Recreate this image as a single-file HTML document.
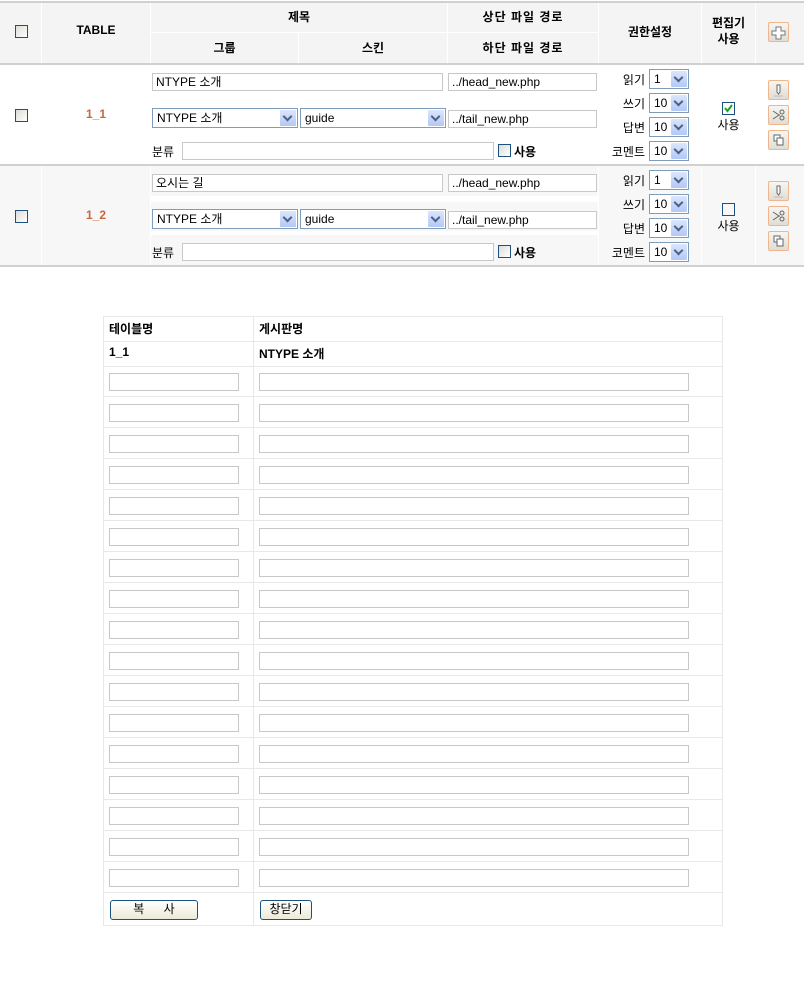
<!DOCTYPE html>
<html><head><meta charset="utf-8">
<style>
*{box-sizing:border-box;margin:0;padding:0}
body{width:804px;height:1000px;background:#fff;position:relative;overflow:hidden;font-family:"Liberation Sans","Noto Sans CJK KR","NanumGothic",sans-serif;font-size:12px;color:#000}
.a{position:absolute}
.hd{position:absolute;font-weight:bold;font-size:12px;text-align:center;white-space:nowrap}
.inp{position:absolute;border:1px solid #c8c8c8;background:#fff;height:18px;font-size:12px;line-height:16px;padding-left:3px;white-space:nowrap;overflow:hidden}
.sel{position:absolute;border:1px solid #7f9db9;background:#fff;height:20px;font-size:12px;line-height:18px;padding-left:4px;white-space:nowrap}
.sel i{position:absolute;right:1px;top:1px;width:16px;height:16px;background:linear-gradient(#dbe6fd,#b3c8f6);border-radius:1px}
.sel i:after{content:"";position:absolute;left:4px;top:4px;width:5px;height:5px;border-right:2px solid #4d6185;border-bottom:2px solid #4d6185;transform:rotate(45deg);top:3px}
.cb{position:absolute;width:13px;height:13px;border:1px solid #1c5180;background:linear-gradient(135deg,#dcdcd7,#fff)}
.ib{position:absolute;width:21px;height:20px;border:1px solid #f0b58a;background:linear-gradient(#f7f6f2,#e0ddd4);border-radius:2px}
.vl{position:absolute;width:1px;background:#fff}
.lt{position:absolute;border:1px solid #e8e8e8}
.lin{position:absolute;border:1px solid #c8c8c8;background:#fff;height:18px}
.btn{position:absolute;height:20px;border:1px solid #1c5180;border-radius:3px;background:linear-gradient(#fff,#ece9d8);font-size:12px;text-align:center;line-height:17px}
.lbl{position:absolute;width:40px;text-align:right;font-size:12px}
</style></head><body>

<!-- header -->
<div class="a" style="left:0;top:1px;width:804px;height:64px;background:#f4f4f4;border-top:2px solid #d0d0d0;border-bottom:2px solid #d0d0d0"></div>
<div class="vl" style="left:41px;top:3px;height:60px"></div>
<div class="vl" style="left:150px;top:3px;height:60px"></div>
<div class="vl" style="left:298px;top:32px;height:31px"></div>
<div class="vl" style="left:447px;top:3px;height:60px"></div>
<div class="vl" style="left:598px;top:3px;height:60px"></div>
<div class="vl" style="left:701px;top:3px;height:60px"></div>
<div class="vl" style="left:755px;top:3px;height:60px"></div>
<div class="a" style="left:151px;top:32px;width:447px;height:1px;background:#fff"></div>
<div class="cb" style="left:15px;top:25px"></div>
<div class="hd" style="left:42px;width:108px;top:23px">TABLE</div>
<div class="hd" style="left:151px;width:296px;top:8px">제목</div>
<div class="hd" style="left:151px;width:147px;top:39px">그룹</div>
<div class="hd" style="left:299px;width:148px;top:39px">스킨</div>
<div class="hd" style="left:448px;width:150px;top:8px;letter-spacing:1px">상단 파일 경로</div>
<div class="hd" style="left:448px;width:150px;top:39px;letter-spacing:1px">하단 파일 경로</div>
<div class="hd" style="left:599px;width:102px;top:23px">권한설정</div>
<div class="hd" style="left:702px;width:53px;top:15px;line-height:16px">편집기<br>사용</div>
<div class="ib" style="left:768px;top:22px"><svg width="19" height="18" style="position:absolute;left:0;top:0"><path d="M7 4h5v4h4v4h-4v4h-5v-4h-4v-4h4z" fill="#fff" stroke="#777"/></svg></div>

<!-- row 1 -->
<div class="a" style="left:0;top:164px;width:804px;height:2px;background:#d0d0d0"></div>
<div class="cb" style="left:15px;top:109px"></div>
<div class="hd" style="left:42px;width:108px;top:107px;color:#c8683a">1_1</div>
<div class="inp" style="left:152px;top:73px;width:291px">NTYPE 소개</div>
<div class="inp" style="left:448px;top:73px;width:149px">../head_new.php</div>
<div class="sel" style="left:152px;top:108px;width:146px">NTYPE 소개<i></i></div>
<div class="sel" style="left:300px;top:108px;width:146px">guide<i></i></div>
<div class="inp" style="left:448px;top:110px;width:149px">../tail_new.php</div>
<div class="a" style="left:152px;top:143px">분류</div>
<div class="inp" style="left:182px;top:142px;width:312px"></div>
<div class="cb" style="left:498px;top:144px"></div>
<div class="a" style="left:514px;top:143px;font-weight:bold">사용</div>
<div class="lbl" style="left:605px;top:71px">읽기</div><div class="sel" style="left:649px;top:69px;width:40px">1<i></i></div>
<div class="lbl" style="left:605px;top:95px">쓰기</div><div class="sel" style="left:649px;top:93px;width:40px">10<i></i></div>
<div class="lbl" style="left:605px;top:119px">답변</div><div class="sel" style="left:649px;top:117px;width:40px">10<i></i></div>
<div class="lbl" style="left:605px;top:143px">코멘트</div><div class="sel" style="left:649px;top:141px;width:40px">10<i></i></div>
<div class="cb" style="left:722px;top:102px;background:#fff"><svg width="11" height="11" style="position:absolute;left:0;top:0"><path d="M2 5l2.5 3L9 2" fill="none" stroke="#22a022" stroke-width="2"/></svg></div>
<div class="a" style="left:702px;width:53px;text-align:center;top:116px">사용</div>
<div class="ib" style="left:768px;top:80px"><svg width="19" height="18" style="position:absolute"><path d="M8 4h3v7l-1.5 2L8 11z" fill="#fff" stroke="#666"/><path d="M5 15h9" stroke="#bbb"/></svg></div>
<div class="ib" style="left:768px;top:105px"><svg width="19" height="18" style="position:absolute"><path d="M4 5l6 4 -6 4M10 9h1" fill="none" stroke="#666"/><circle cx="13" cy="6" r="2" fill="none" stroke="#666"/><circle cx="13" cy="12" r="2" fill="none" stroke="#666"/></svg></div>
<div class="ib" style="left:768px;top:130px"><svg width="19" height="18" style="position:absolute"><rect x="5" y="4" width="6" height="6" fill="#fff" stroke="#666"/><rect x="8" y="7" width="6" height="7" fill="#fff" stroke="#666"/></svg></div>

<!-- row 2 -->
<div class="a" style="left:0;top:166px;width:804px;height:99px;background:#f7f7f7"></div>
<div class="vl" style="left:41px;top:166px;height:99px"></div>
<div class="vl" style="left:150px;top:166px;height:99px"></div>
<div class="vl" style="left:598px;top:166px;height:99px"></div>
<div class="vl" style="left:701px;top:166px;height:99px"></div>
<div class="vl" style="left:755px;top:166px;height:99px"></div>
<div class="a" style="left:151px;top:196px;width:447px;height:6px;background:#fff"></div>
<div class="a" style="left:151px;top:231px;width:447px;height:4px;background:#fff"></div>
<div class="a" style="left:0;top:265px;width:804px;height:2px;background:#d0d0d0"></div>
<div class="cb" style="left:15px;top:210px"></div>
<div class="hd" style="left:42px;width:108px;top:208px;color:#c8683a">1_2</div>
<div class="inp" style="left:152px;top:174px;width:291px">오시는 길</div>
<div class="inp" style="left:448px;top:174px;width:149px">../head_new.php</div>
<div class="sel" style="left:152px;top:209px;width:146px">NTYPE 소개<i></i></div>
<div class="sel" style="left:300px;top:209px;width:146px">guide<i></i></div>
<div class="inp" style="left:448px;top:211px;width:149px">../tail_new.php</div>
<div class="a" style="left:152px;top:244px">분류</div>
<div class="inp" style="left:182px;top:243px;width:312px"></div>
<div class="cb" style="left:498px;top:245px"></div>
<div class="a" style="left:514px;top:244px;font-weight:bold">사용</div>
<div class="lbl" style="left:605px;top:172px">읽기</div><div class="sel" style="left:649px;top:170px;width:40px">1<i></i></div>
<div class="lbl" style="left:605px;top:196px">쓰기</div><div class="sel" style="left:649px;top:194px;width:40px">10<i></i></div>
<div class="lbl" style="left:605px;top:220px">답변</div><div class="sel" style="left:649px;top:218px;width:40px">10<i></i></div>
<div class="lbl" style="left:605px;top:244px">코멘트</div><div class="sel" style="left:649px;top:242px;width:40px">10<i></i></div>
<div class="cb" style="left:722px;top:203px;background:#f7f7f7"></div>
<div class="a" style="left:702px;width:53px;text-align:center;top:217px">사용</div>
<div class="ib" style="left:768px;top:181px"><svg width="19" height="18" style="position:absolute"><path d="M8 4h3v7l-1.5 2L8 11z" fill="#fff" stroke="#666"/><path d="M5 15h9" stroke="#bbb"/></svg></div>
<div class="ib" style="left:768px;top:206px"><svg width="19" height="18" style="position:absolute"><path d="M4 5l6 4 -6 4M10 9h1" fill="none" stroke="#666"/><circle cx="13" cy="6" r="2" fill="none" stroke="#666"/><circle cx="13" cy="12" r="2" fill="none" stroke="#666"/></svg></div>
<div class="ib" style="left:768px;top:231px"><svg width="19" height="18" style="position:absolute"><rect x="5" y="4" width="6" height="6" fill="#fff" stroke="#666"/><rect x="8" y="7" width="6" height="7" fill="#fff" stroke="#666"/></svg></div>

<!-- lower table -->
<div class="lt" style="left:103px;top:316px;width:620px;height:610px"></div>
<div class="a" style="left:253px;top:316px;width:1px;height:610px;background:#e8e8e8"></div>
<div class="a" style="left:103px;top:341px;width:620px;height:1px;background:#e8e8e8"></div>
<div class="a" style="left:103px;top:366px;width:620px;height:1px;background:#e8e8e8"></div>
<div class="hd" style="left:109px;top:320px">테이블명</div>
<div class="hd" style="left:259px;top:320px">게시판명</div>
<div class="hd" style="left:109px;top:345px">1_1</div>
<div class="hd" style="left:259px;top:345px">NTYPE 소개</div>

<div style="position:absolute;left:0;top:366px">
<div style="position:relative;height:31px"><div class="lin" style="left:109px;top:7px;width:130px"></div><div class="lin" style="left:259px;top:7px;width:430px"></div><div class="a" style="left:103px;top:30px;width:620px;height:1px;background:#e8e8e8"></div></div>
<div style="position:relative;height:31px"><div class="lin" style="left:109px;top:7px;width:130px"></div><div class="lin" style="left:259px;top:7px;width:430px"></div><div class="a" style="left:103px;top:30px;width:620px;height:1px;background:#e8e8e8"></div></div>
<div style="position:relative;height:31px"><div class="lin" style="left:109px;top:7px;width:130px"></div><div class="lin" style="left:259px;top:7px;width:430px"></div><div class="a" style="left:103px;top:30px;width:620px;height:1px;background:#e8e8e8"></div></div>
<div style="position:relative;height:31px"><div class="lin" style="left:109px;top:7px;width:130px"></div><div class="lin" style="left:259px;top:7px;width:430px"></div><div class="a" style="left:103px;top:30px;width:620px;height:1px;background:#e8e8e8"></div></div>
<div style="position:relative;height:31px"><div class="lin" style="left:109px;top:7px;width:130px"></div><div class="lin" style="left:259px;top:7px;width:430px"></div><div class="a" style="left:103px;top:30px;width:620px;height:1px;background:#e8e8e8"></div></div>
<div style="position:relative;height:31px"><div class="lin" style="left:109px;top:7px;width:130px"></div><div class="lin" style="left:259px;top:7px;width:430px"></div><div class="a" style="left:103px;top:30px;width:620px;height:1px;background:#e8e8e8"></div></div>
<div style="position:relative;height:31px"><div class="lin" style="left:109px;top:7px;width:130px"></div><div class="lin" style="left:259px;top:7px;width:430px"></div><div class="a" style="left:103px;top:30px;width:620px;height:1px;background:#e8e8e8"></div></div>
<div style="position:relative;height:31px"><div class="lin" style="left:109px;top:7px;width:130px"></div><div class="lin" style="left:259px;top:7px;width:430px"></div><div class="a" style="left:103px;top:30px;width:620px;height:1px;background:#e8e8e8"></div></div>
<div style="position:relative;height:31px"><div class="lin" style="left:109px;top:7px;width:130px"></div><div class="lin" style="left:259px;top:7px;width:430px"></div><div class="a" style="left:103px;top:30px;width:620px;height:1px;background:#e8e8e8"></div></div>
<div style="position:relative;height:31px"><div class="lin" style="left:109px;top:7px;width:130px"></div><div class="lin" style="left:259px;top:7px;width:430px"></div><div class="a" style="left:103px;top:30px;width:620px;height:1px;background:#e8e8e8"></div></div>
<div style="position:relative;height:31px"><div class="lin" style="left:109px;top:7px;width:130px"></div><div class="lin" style="left:259px;top:7px;width:430px"></div><div class="a" style="left:103px;top:30px;width:620px;height:1px;background:#e8e8e8"></div></div>
<div style="position:relative;height:31px"><div class="lin" style="left:109px;top:7px;width:130px"></div><div class="lin" style="left:259px;top:7px;width:430px"></div><div class="a" style="left:103px;top:30px;width:620px;height:1px;background:#e8e8e8"></div></div>
<div style="position:relative;height:31px"><div class="lin" style="left:109px;top:7px;width:130px"></div><div class="lin" style="left:259px;top:7px;width:430px"></div><div class="a" style="left:103px;top:30px;width:620px;height:1px;background:#e8e8e8"></div></div>
<div style="position:relative;height:31px"><div class="lin" style="left:109px;top:7px;width:130px"></div><div class="lin" style="left:259px;top:7px;width:430px"></div><div class="a" style="left:103px;top:30px;width:620px;height:1px;background:#e8e8e8"></div></div>
<div style="position:relative;height:31px"><div class="lin" style="left:109px;top:7px;width:130px"></div><div class="lin" style="left:259px;top:7px;width:430px"></div><div class="a" style="left:103px;top:30px;width:620px;height:1px;background:#e8e8e8"></div></div>
<div style="position:relative;height:31px"><div class="lin" style="left:109px;top:7px;width:130px"></div><div class="lin" style="left:259px;top:7px;width:430px"></div><div class="a" style="left:103px;top:30px;width:620px;height:1px;background:#e8e8e8"></div></div>
<div style="position:relative;height:31px"><div class="lin" style="left:109px;top:7px;width:130px"></div><div class="lin" style="left:259px;top:7px;width:430px"></div><div class="a" style="left:103px;top:30px;width:620px;height:1px;background:#e8e8e8"></div></div>
</div>

<div class="btn" style="left:110px;top:900px;width:88px;letter-spacing:8px;padding-left:8px">복 사</div>
<div class="btn" style="left:260px;top:900px;width:52px">창닫기</div>
</body></html>
